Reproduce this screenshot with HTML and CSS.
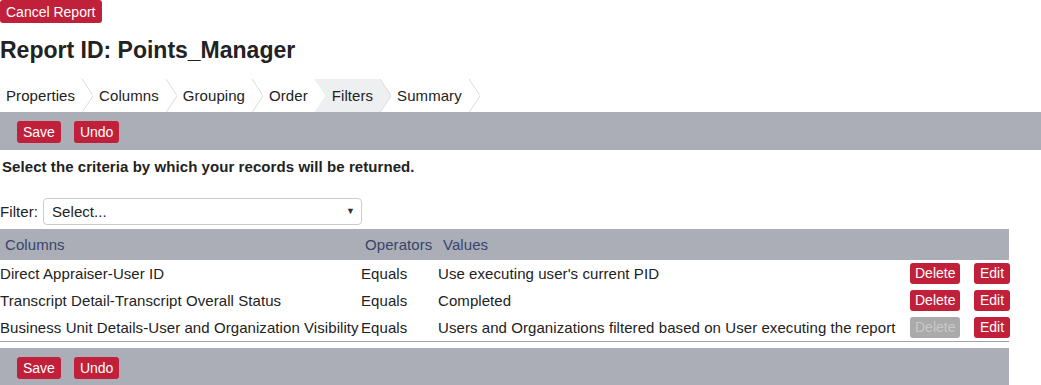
FILE: index.html
```html
<!DOCTYPE html>
<html lang="en">

<head>
    <meta charset="UTF-8">
    <meta name="viewport" content="width=device-width, initial-scale=1.0">
    <title>Report - Filters</title>
    <link rel="stylesheet" href="styles.css">
</head>

<body>
    <button class="btn btn-cancel">Cancel Report</button>
    <h1 class="report-title">Report ID: Points_Manager</h1>

    <ul class="steps">
        <li><a href="#">Properties</a></li>
        <li><a href="#">Columns</a></li>
        <li><a href="#">Grouping</a></li>
        <li><a href="#">Order</a></li>
        <li class="active"><a href="#">Filters</a></li>
        <li><a href="#">Summary</a></li>
    </ul>

    <div class="toolbar">
        <button class="btn">Save</button>
        <button class="btn">Undo</button>
    </div>

    <section class="filters">
        <p class="hint">Select the criteria by which your records will be returned.</p>

        <div class="filter-pick">
            <label for="filter">Filter:</label>
            <span class="select-wrap">
                <select id="filter">
                    <option>Select...</option>
                </select>
            </span>
        </div>

        <table class="criteria">
            <colgroup>
                <col style="width: 360px">
                <col style="width: 78px">
                <col>
                <col style="width: 64px">
                <col style="width: 36px">
            </colgroup>
            <thead>
                <tr>
                    <th>Columns</th>
                    <th>Operators</th>
                    <th>Values</th>
                    <th></th>
                    <th></th>
                </tr>
            </thead>
            <tbody>
                <tr>
                    <td>Direct Appraiser-User ID</td>
                    <td>Equals</td>
                    <td>Use executing user's current PID</td>
                    <td><button class="btn btn-sm">Delete</button></td>
                    <td><button class="btn btn-sm btn-edit">Edit</button></td>
                </tr>
                <tr>
                    <td>Transcript Detail-Transcript Overall Status</td>
                    <td>Equals</td>
                    <td>Completed</td>
                    <td><button class="btn btn-sm">Delete</button></td>
                    <td><button class="btn btn-sm btn-edit">Edit</button></td>
                </tr>
                <tr>
                    <td>Business Unit Details-User and Organization Visibility</td>
                    <td>Equals</td>
                    <td>Users and Organizations filtered based on User executing the report</td>
                    <td><button class="btn btn-sm" disabled>Delete</button></td>
                    <td><button class="btn btn-sm btn-edit">Edit</button></td>
                </tr>
            </tbody>
        </table>

        <div class="toolbar toolbar-bottom">
            <button class="btn">Save</button>
            <button class="btn">Undo</button>
        </div>
    </section>
</body>

</html>
```

FILE: styles.css
```css
body {
    font-family: "Liberation Sans", Arial, sans-serif;
    font-size: 15px;
    letter-spacing: 0.07px;
    color: #222;
    margin: 0;
    padding: 0;
}

.btn {
    background-color: #c1203a;
    color: #fff;
    border: none;
    border-radius: 3px;
    font-family: inherit;
    font-size: 14px;
    letter-spacing: 0;
    line-height: 16px;
    padding: 3px 6px;
    cursor: pointer;
}

.btn-cancel {
    display: block;
    padding: 4px 6px 3px;
}

.btn-sm {
    display: block;
    padding: 2px 5px;
    line-height: 17px;
}

.btn-edit {
    padding: 2px 6px;
}

.btn:disabled {
    background-color: #aaa;
    color: #c9c9c9;
    cursor: default;
}

.report-title {
    font-size: 23px;
    line-height: 26px;
    letter-spacing: 0;
    margin: 14px 0 16px;
}

/* wizard steps */
.steps {
    list-style: none;
    display: flex;
    margin: 0;
    padding: 0;
    height: 33px;
}

.steps li {
    position: relative;
    padding: 0 18px 0 6px;
    line-height: 33px;
}

.steps a {
    text-decoration: none;
    color: #222;
}

.steps li::after {
    content: "";
    position: absolute;
    top: 0;
    right: 0;
    width: 11px;
    height: 100%;
    background:
        linear-gradient(to top right, transparent calc(50% - 0.7px), #d4d4d4 50%, transparent calc(50% + 0.7px)) top / 100% 50% no-repeat,
        linear-gradient(to bottom right, transparent calc(50% - 0.7px), #d4d4d4 50%, transparent calc(50% + 0.7px)) bottom / 100% 50% no-repeat;
}

.steps li.active {
    z-index: 0;
}

.steps li.active::before {
    content: "";
    position: absolute;
    top: 0;
    bottom: 0;
    left: -11px;
    right: 0;
    z-index: -1;
    background-color: #eeeff0;
    clip-path: polygon(0 0, calc(100% - 11px) 0, 100% 50%, calc(100% - 11px) 100%, 0 100%, 11px 50%);
}

.toolbar {
    background-color: #abaeb7;
    padding: 9px 17px 7px;
    display: flex;
    align-items: flex-start;
    gap: 13px;
}

.hint {
    font-weight: bold;
    line-height: 17px;
    margin: 8px 0 0 2px;
}

.filter-pick {
    display: flex;
    align-items: center;
    gap: 5px;
    margin-top: 23px;
}

.select-wrap {
    position: relative;
}

.select-wrap select {
    appearance: none;
    width: 319px;
    height: 27px;
    border: 1px solid #ccc;
    border-radius: 4px;
    background: #fff;
    font-family: inherit;
    font-size: 15px;
    letter-spacing: inherit;
    color: #222;
    padding: 0 8px;
}

.select-wrap::after {
    content: "\25BC";
    position: absolute;
    right: 7px;
    top: 8px;
    font-size: 9px;
    color: #333;
    pointer-events: none;
}

.filters {
    width: 1009px;
}

.criteria {
    width: 1009px;
    table-layout: fixed;
    border-collapse: collapse;
    margin-top: 4px;
    border-bottom: 1px solid #a4a4a4;
}

.criteria th {
    background-color: #abaeb7;
    color: #36446c;
    font-weight: normal;
    text-align: left;
    height: 31px;
    padding: 0 0 0 5px;
}

.criteria td {
    height: 27px;
    padding: 0 0 0 1px;
    white-space: nowrap;
}

.criteria td:first-child,
.criteria td:nth-child(3) {
    padding-left: 0;
}

.toolbar-bottom {
    margin-top: 6px;
    height: 30px;
}
```
